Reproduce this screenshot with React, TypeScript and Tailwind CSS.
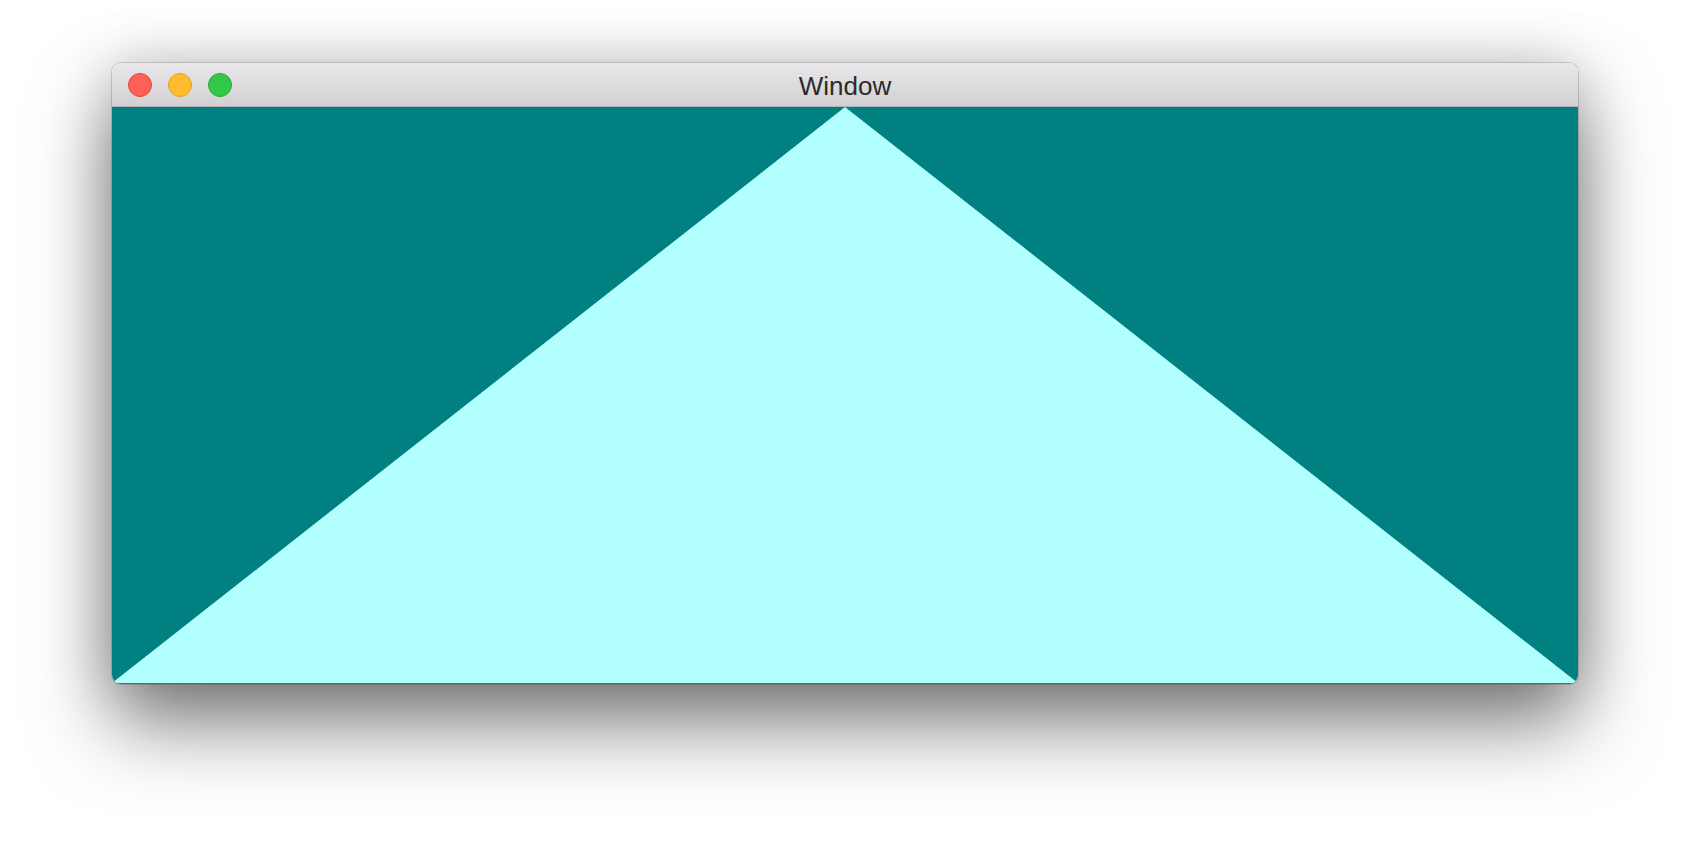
import React from "react";

export default function App() {
  return (
    <div className="w-[1690px] h-[844px] bg-white flex justify-center pt-[63px] overflow-hidden" style={{ fontFamily: '"Liberation Sans", Arial, sans-serif' }}>
      <div className="w-[1466px] h-[621px] flex flex-col rounded-[9px] overflow-hidden shadow-[0_40px_80px_rgba(0,0,0,0.5),0_0_60px_rgba(0,0,0,0.18),0_0_0_1px_rgba(0,0,0,0.14)]">
        <div className="relative h-[44px] shrink-0 flex items-center bg-gradient-to-b from-[#e9e7e9] to-[#d2d0d2] border-b border-[#b4b2b4]">
          <div className="flex items-center gap-[16px] pl-[16px]">
            <span className="w-[24px] h-[24px] rounded-full bg-[#fe5f57] border border-[#e2463f]" />
            <span className="w-[24px] h-[24px] rounded-full bg-[#febc2e] border border-[#e1a325]" />
            <span className="w-[24px] h-[24px] rounded-full bg-[#34c84a] border border-[#25a93a]" />
          </div>
          <div className="absolute inset-0 pt-[3px] flex items-center justify-center text-[26px] text-[#2b2a2c] pointer-events-none">
            Window
          </div>
        </div>
        <div className="flex-1 bg-[#008080] border-b border-[#5a6a6a]">
          <svg width="1466" height="576" viewBox="0 0 1466 576" className="block">
            <polygon points="0,576 733,0 1466,576" fill="#b2ffff" />
          </svg>
        </div>
      </div>
    </div>
  );
}
